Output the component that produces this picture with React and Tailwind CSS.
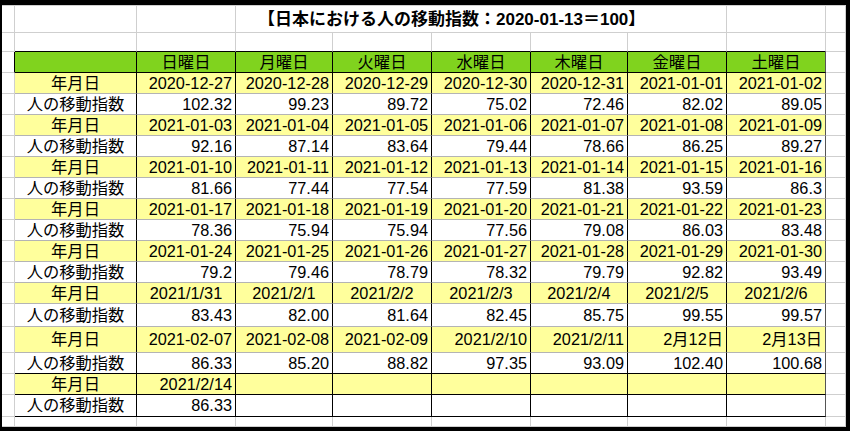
import React from 'react';

const W = ['w-[13px]', 'w-[122px]', 'w-[99px]', 'w-[97px]', 'w-[99px]', 'w-[99px]', 'w-[97px]', 'w-[99px]', 'w-[99px]', 'w-[20px]'];

const GR = 'border-r-[#cfcfcf]';
const GB = 'border-b-[#cfcfcf]';

const days = ['日曜日', '月曜日', '火曜日', '水曜日', '木曜日', '金曜日', '土曜日'];

const weeks = [
  { d: ['2020-12-27', '2020-12-28', '2020-12-29', '2020-12-30', '2020-12-31', '2021-01-01', '2021-01-02'], v: ['102.32', '99.23', '89.72', '75.02', '72.46', '82.02', '89.05'] },
  { d: ['2021-01-03', '2021-01-04', '2021-01-05', '2021-01-06', '2021-01-07', '2021-01-08', '2021-01-09'], v: ['92.16', '87.14', '83.64', '79.44', '78.66', '86.25', '89.27'] },
  { d: ['2021-01-10', '2021-01-11', '2021-01-12', '2021-01-13', '2021-01-14', '2021-01-15', '2021-01-16'], v: ['81.66', '77.44', '77.54', '77.59', '81.38', '93.59', '86.3'] },
  { d: ['2021-01-17', '2021-01-18', '2021-01-19', '2021-01-20', '2021-01-21', '2021-01-22', '2021-01-23'], v: ['78.36', '75.94', '75.94', '77.56', '79.08', '86.03', '83.48'] },
  { d: ['2021-01-24', '2021-01-25', '2021-01-26', '2021-01-27', '2021-01-28', '2021-01-29', '2021-01-30'], v: ['79.2', '79.46', '78.79', '78.32', '79.79', '92.82', '93.49'] },
  { d: ['2021/1/31', '2021/2/1', '2021/2/2', '2021/2/3', '2021/2/4', '2021/2/5', '2021/2/6'], v: ['83.43', '82.00', '81.64', '82.45', '85.75', '99.55', '99.57'], center: true, hv: 'h-[23px]' },
  { d: ['2021-02-07', '2021-02-08', '2021-02-09', '2021/2/10', '2021/2/11', '2月12日', '2月13日'], v: ['86.33', '85.20', '88.82', '97.35', '93.09', '102.40', '100.68'], hd: 'h-[26px]', bv: 'border-b-black' },
  { d: ['2021/2/14', '', '', '', '', '', ''], v: ['86.33', '', '', '', '', '', ''], bd: 'border-b-black', bv: 'border-b-black', hv: 'h-[22px]' },
];

const Cell = ({ w, r, b, bg = '', align = 'justify-end pr-[3px]', children }) => (
  <div className={`${w} ${r} ${b} ${bg} ${align} shrink-0 border-r border-b box-border flex items-center leading-none whitespace-nowrap overflow-visible`}>
    {children}
  </div>
);

const Edge = ({ w, b = GB }) => <Cell w={w} r={GR} b={b} />;

const App = () => {
  return (
    <div className="w-[850px] h-[431px] bg-white border-t-[5px] border-l-2 border-r-4 border-b-4 border-black box-border overflow-hidden text-[16.3px] text-black font-['Liberation_Sans','Noto_Sans_CJK_JP',sans-serif]">
      {/* title */}
      <div className="flex h-[28px] border-t border-t-[#cfcfcf] box-border">
        <Edge w={W[0]} />
        <Edge w={W[1]} />
        <Edge w={W[2]} />
        <Cell w="w-[491px]" r={GR} b={GB} align="justify-start pl-[22px]">
          <span className="font-bold text-[17px]">【日本における人の移動指数：2020-01-13＝100】</span>
        </Cell>
        <Edge w={W[8]} />
        <Edge w={W[9]} />
      </div>

      {/* empty row */}
      <div className="flex h-[19px]">
        <Edge w={W[0]} />
        {W.slice(1, 9).map((w, i) => (
          <Edge key={i} w={w} b="border-b-black" />
        ))}
        <Edge w={W[9]} />
      </div>

      {/* header */}
      <div className="flex h-[21px]">
        <Cell w={W[0]} r="border-r-black" b={GB} />
        <Cell w={W[1]} r="border-r-black" b="border-b-black" bg="bg-[#80d31e]" />
        {days.map((d, i) => (
          <Cell key={d} w={W[i + 2]} r={i === 6 ? 'border-r-[#555]' : 'border-r-black'} b="border-b-black" bg="bg-[#80d31e]" align="justify-center">
            {d}
          </Cell>
        ))}
        <Edge w={W[9]} />
      </div>

      {weeks.map((wk, k) => (
        <React.Fragment key={k}>
          <div className={`flex ${wk.hd || 'h-[21px]'}`}>
            <Edge w={W[0]} />
            <Cell w={W[1]} r="border-r-black" b={wk.bd || 'border-b-[#b4b4b4]'} bg="bg-[#ffff9c]" align="justify-center">
              年月日
            </Cell>
            {wk.d.map((d, i) => (
              <Cell
                key={i}
                w={W[i + 2]}
                r={i === 6 ? 'border-r-[#555]' : 'border-r-black'}
                b={wk.bd || 'border-b-[#b4b4b4]'}
                bg="bg-[#ffff9c]"
                align={wk.center ? 'justify-center' : 'justify-end pr-[3px]'}
              >
                {d}
              </Cell>
            ))}
            <Edge w={W[9]} />
          </div>
          <div className={`flex ${wk.hv || 'h-[21px]'}`}>
            <Edge w={W[0]} />
            <Cell w={W[1]} r="border-r-black" b={wk.bv || 'border-b-[#b4b4b4]'} align="justify-center">
              人の移動指数
            </Cell>
            {wk.v.map((v, i) => (
              <Cell key={i} w={W[i + 2]} r={i === 6 ? 'border-r-[#555]' : 'border-r-black'} b={wk.bv || 'border-b-[#b4b4b4]'}>
                {v}
              </Cell>
            ))}
            <Edge w={W[9]} />
          </div>
        </React.Fragment>
      ))}

      {/* trailing partial row */}
      <div className="flex h-[10px]">
        {W.map((w, i) => (
          <Edge key={i} w={w} />
        ))}
      </div>
    </div>
  );
};

export default App;
